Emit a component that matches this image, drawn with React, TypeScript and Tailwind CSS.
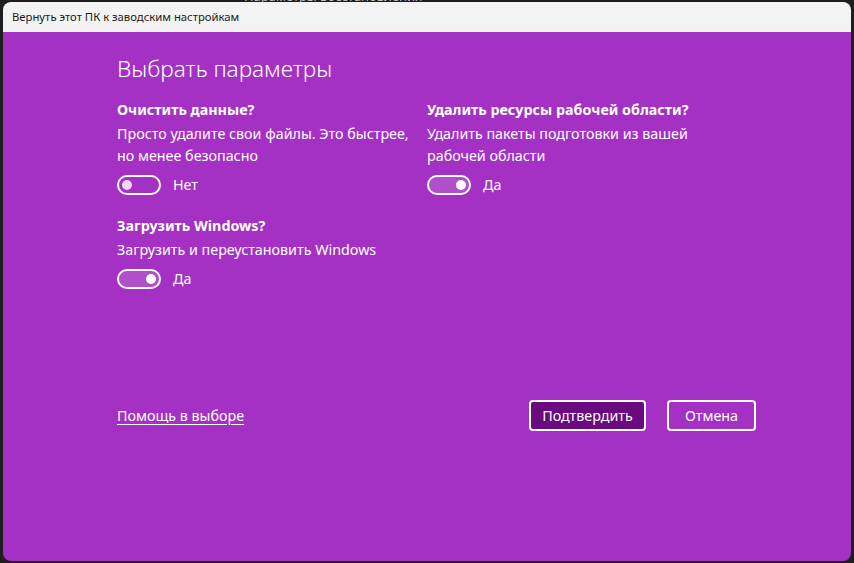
import React, { useState } from 'react'

const FONT = { fontFamily: '"Noto Sans", "Open Sans", sans-serif' }

function Toggle({ on, onClick }: { on: boolean; onClick: () => void }) {
  return (
    <button
      type="button"
      role="switch"
      aria-checked={on}
      onClick={onClick}
      className={`flex h-[20px] w-[44px] items-center rounded-full border-2 border-white px-[3px] ${
        on ? 'justify-end bg-[#b04fc9]' : 'justify-start bg-transparent'
      }`}
    >
      <span className={`h-[10px] w-[10px] rounded-full ${on ? 'bg-white' : 'bg-[#f1d6f6]'}`} />
    </button>
  )
}

function Option({
  title,
  lines,
  on,
  onToggle,
}: {
  title: string
  lines: string[]
  on: boolean
  onToggle: () => void
}) {
  return (
    <div className="flex flex-col">
      <div className="text-[14.3px] font-bold leading-[22px] text-white">{title}</div>
      <div className="mt-[2px] text-[14.3px] leading-[22px] text-white">
        {lines.map((l) => (
          <div key={l}>{l}</div>
        ))}
      </div>
      <div className="mt-[8px] flex items-center gap-[12px]">
        <Toggle on={on} onClick={onToggle} />
        <span className="text-[14.3px] leading-[20px] text-white">{on ? 'Да' : 'Нет'}</span>
      </div>
    </div>
  )
}

export default function App() {
  const [clean, setClean] = useState(false)
  const [removeRes, setRemoveRes] = useState(true)
  const [download, setDownload] = useState(true)

  return (
    <div className="flex h-[563px] w-[854px] flex-col bg-[#1e1e1e]" style={FONT}>
      {/* окно позади */}
      <div className="h-[2px] overflow-hidden pl-[244px]">
        <div className="-mt-[10px] text-[13px] leading-[12px] text-[#bdbdbd]">Параметры восстановления</div>
      </div>

      <div className="mx-[3px] mb-[2px] flex flex-1 flex-col overflow-hidden rounded-[8px]">
        <div className="flex h-[30px] items-center bg-[#f3f3f3] pl-[9px] text-[11.3px] text-[#1a1a1a]">
          Вернуть этот ПК к заводским настройкам
        </div>

        <div className="flex flex-1 flex-col bg-[#a431c4] pl-[114px] pr-[95px] pt-[22px] pb-[130px]">
          <h1 className="text-[22.6px] font-light leading-[30px] text-white">Выбрать параметры</h1>

          <div className="mt-[15px] grid grid-cols-[310px_1fr] gap-y-[20px]">
            <Option
              title="Очистить данные?"
              lines={['Просто удалите свои файлы. Это быстрее,', 'но менее безопасно']}
              on={clean}
              onToggle={() => setClean((v) => !v)}
            />
            <Option
              title="Удалить ресурсы рабочей области?"
              lines={['Удалить пакеты подготовки из вашей', 'рабочей области']}
              on={removeRes}
              onToggle={() => setRemoveRes((v) => !v)}
            />
            <Option
              title="Загрузить Windows?"
              lines={['Загрузить и переустановить Windows']}
              on={download}
              onToggle={() => setDownload((v) => !v)}
            />
          </div>

          <div className="mt-auto flex items-center">
            <a href="#" className="text-[14.3px] text-white underline underline-offset-[3px]">
              Помощь в выборе
            </a>
            <div className="ml-auto flex gap-[21px]">
              <button
                type="button"
                className="h-[31px] w-[117px] rounded-[4px] border-2 border-white bg-[#6b0a7f] text-[14.3px] text-white"
              >
                Подтвердить
              </button>
              <button
                type="button"
                className="h-[31px] w-[89px] rounded-[4px] border-2 border-white bg-transparent text-[14.3px] text-white"
              >
                Отмена
              </button>
            </div>
          </div>
        </div>
      </div>
    </div>
  )
}
